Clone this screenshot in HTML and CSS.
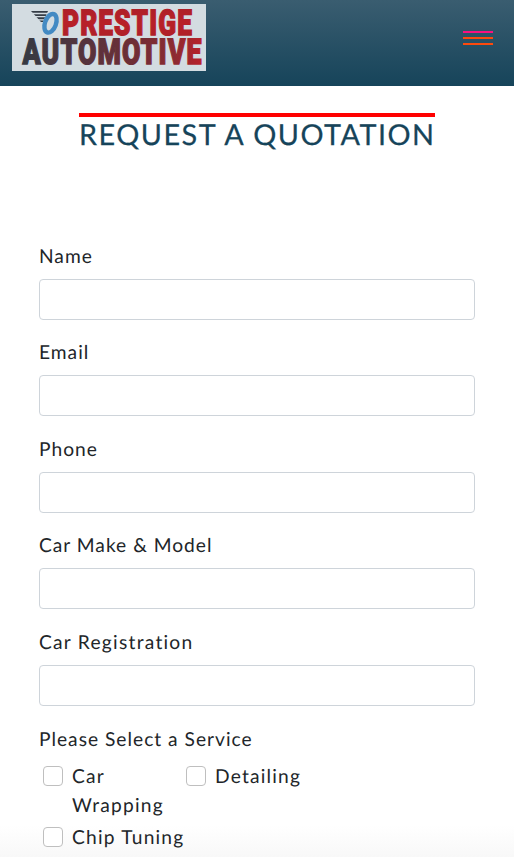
FILE: index.html
```html
<!DOCTYPE html>
<html lang="en">
<head>
<meta charset="utf-8">
<title>Prestige Automotive</title>
<link rel="stylesheet" href="styles.css">
</head>
<body>
<header class="navbar">
  <svg class="logo" width="194" height="67" viewBox="0 0 194 67" role="img" aria-label="Prestige Automotive">
    <defs>
      <linearGradient id="red" x1="0" y1="0" x2="0" y2="1"><stop offset="0" stop-color="#aa2029"/><stop offset="0.5" stop-color="#b82028"/><stop offset="1" stop-color="#a92028"/></linearGradient>
      <linearGradient id="fade" gradientUnits="userSpaceOnUse" x1="10" y1="0" x2="190" y2="0"><stop offset="0" stop-color="#353a43"/><stop offset="0.3" stop-color="#51343e"/><stop offset="0.65" stop-color="#722d35"/><stop offset="0.85" stop-color="#8d2a31"/><stop offset="1" stop-color="#b92029"/></linearGradient>
    </defs>
    <rect width="194" height="67" fill="#d3dce1"/>
    <path d="M19 7H36L31 18H29Z" fill="#353d46"/>
    <path d="M19 9.5H36M22 12.7H34M25 15.8H33" stroke="#d3dce1" stroke-width="1.3"/>
    <ellipse cx="38.5" cy="19.3" rx="5.5" ry="9.7" transform="rotate(20 38.5 19.3)" fill="#d3dce1" stroke="#438ac3" stroke-width="4.4"/>
    <text class="logo-text" x="50" y="31.2" textLength="131" lengthAdjust="spacingAndGlyphs" fill="url(#red)" stroke="url(#red)">PRESTIGE</text>
    <text class="logo-text" x="10.5" y="59.8" textLength="180" lengthAdjust="spacingAndGlyphs" fill="url(#fade)" stroke="url(#fade)">AUTOMOTIVE</text>
  </svg>
  <button class="toggler" aria-label="Menu"><span class="bar bar-pink"></span><span class="bar"></span><span class="bar"></span></button>
</header>
<main>
  <h1 class="title">REQUEST A QUOTATION</h1>
  <form class="quote">
    <div class="field"><label for="name">Name</label><input id="name" type="text"></div>
    <div class="field"><label for="email">Email</label><input id="email" type="email"></div>
    <div class="field"><label for="phone">Phone</label><input id="phone" type="tel"></div>
    <div class="field"><label for="model">Car Make &amp; Model</label><input id="model" type="text"></div>
    <div class="field"><label class="wide" for="reg">Car Registration</label><input id="reg" type="text"></div>
    <div class="caption">Please Select a Service</div>
    <div class="services">
      <label class="check"><input type="checkbox"><span>Car Wrapping</span></label>
      <label class="check"><input type="checkbox"><span>Detailing</span></label>
      <label class="check"><input type="checkbox"><span>Chip Tuning</span></label>
    </div>
  </form>
</main>
</body>
</html>
```
FILE: styles.css
```css
* { box-sizing: border-box; }
html { overflow: hidden; }
body {
  margin: 0;
  height: 857px;
  overflow: hidden;
  font-family: Lato, sans-serif;
  font-size: 19.2px;
  line-height: 28.8px;
  letter-spacing: 1px;
  text-rendering: geometricPrecision;
  color: #212529;
  background: linear-gradient(#fff 825px, #f8f8f8 857px);
}
.navbar {
  display: flex;
  justify-content: space-between;
  align-items: flex-start;
  height: 86px;
  padding: 4px 21px 0 12px;
  background: linear-gradient(#3a5d70, #16445a);
}
.logo { display: block; }
.logo-text {
  font-family: Roboto, sans-serif;
  font-weight: 900;
  font-size: 35.5px;
  letter-spacing: 1.5px;
  stroke-width: 1.4px;
}
.toggler {
  display: flex;
  flex-direction: column;
  gap: 4px;
  margin-top: 27px;
  padding: 0;
  border: 0;
  background: none;
}
.bar { width: 30px; height: 2px; background: #ff4a0c; }
.bar-pink { background: #fa1080; }
.title {
  width: 356px;
  margin: 27px auto 0;
  border-top: 4px solid #f00;
  font-size: 28.8px;
  font-weight: 400;
  line-height: 37px;
  letter-spacing: 1.5px;
  -webkit-text-stroke: 0.25px #16445a;
  white-space: nowrap;
  color: #16445a;
}
.quote { margin: 88.6px 39px 0; }
.field { margin-bottom: 19.6px; }
.field label { display: block; margin-bottom: 7.2px; }
.field .wide { letter-spacing: 1.25px; }
.field input {
  display: block;
  width: 100%;
  height: 41px;
  border: 1px solid #ced4da;
  border-radius: 4px;
  background: #fff;
}
.caption { padding-top: 0.8px; }
.services {
  display: grid;
  grid-template-columns: 143px 143px;
  row-gap: 3px;
  margin: 8px 0 0 4px;
}
.check { display: flex; align-items: flex-start; gap: 9px; letter-spacing: 1.2px; }
.check input {
  appearance: none;
  flex: none;
  width: 20px;
  height: 20px;
  margin: 3px 0 0;
  border: 1px solid #bfbfbf;
  border-radius: 4px;
  background: #fff;
}
```
